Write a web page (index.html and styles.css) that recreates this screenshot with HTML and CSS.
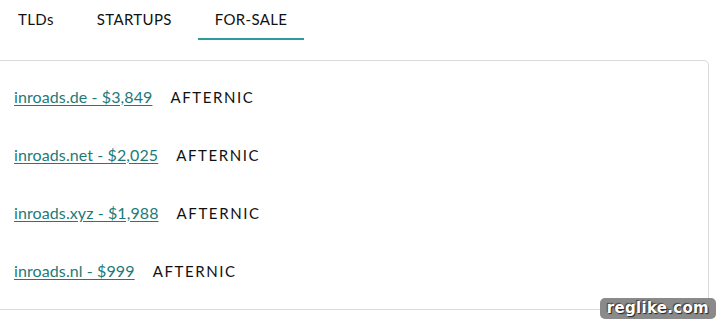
FILE: index.html
```html
<!DOCTYPE html>
<html>
<head>
<meta charset="utf-8">
<link rel="stylesheet" href="styles.css">
</head>
<body>
<div class="page">
  <nav class="tabs">
    <div class="tab">TLDs</div>
    <div class="tab">STARTUPS</div>
    <div class="tab active">FOR-SALE</div>
  </nav>
  <div class="card">
    <div class="row"><a class="link" href="#">inroads.de - $3,849</a><span class="vendor">AFTERNIC</span></div>
    <div class="row"><a class="link" href="#">inroads.net - $2,025</a><span class="vendor">AFTERNIC</span></div>
    <div class="row"><a class="link" href="#">inroads.xyz - $1,988</a><span class="vendor">AFTERNIC</span></div>
    <div class="row"><a class="link" href="#">inroads.nl - $999</a><span class="vendor">AFTERNIC</span></div>
  </div>
  <div class="watermark">reglike.com</div>
</div>
</body>
</html>
```
FILE: styles.css
```css
html, body {
  margin: 0;
  padding: 0;
  background: #fff;
}
.page {
  position: relative;
  width: 717px;
  height: 323px;
  overflow: hidden;
  font-family: Lato, "Open Sans", sans-serif;
  color: #111;
}
.tabs {
  display: flex;
  gap: 9px;
  padding-left: 1px;
  height: 40px;
}
.tab {
  padding: 0 17px;
  font-size: 15px;
  letter-spacing: 0.35px;
  line-height: 39px;
  height: 38px;
  color: #111;
  border-bottom: 2px solid transparent;
}
.tab.active {
  border-bottom-color: #2f9a9a;
}
.card {
  margin-top: 20px;
  margin-left: -4px;
  width: 713px;
  height: 250px;
  border: 1px solid #d6dadd;
  border-radius: 5px;
  padding-top: 6px;
  box-sizing: border-box;
  display: flex;
  flex-direction: column;
}
.row {
  display: flex;
  align-items: center;
  gap: 18px;
  height: 58px;
  padding-left: 17px;
}
.link {
  color: #1d7a78;
  font-size: 16px;
  letter-spacing: 0.1px;
  text-decoration: underline;
  text-underline-offset: 2px;
}
.vendor {
  font-size: 15px;
  letter-spacing: 1.6px;
  color: #111;
  margin-top: 2px;
}
.watermark {
  position: absolute;
  right: 1px;
  bottom: 4px;
  padding: 1px 7px 2px;
  background: #8a8a8a;
  border-radius: 5px;
  color: #fff;
  font-family: "DejaVu Sans", sans-serif;
  font-weight: bold;
  font-size: 15px;
  letter-spacing: 0.3px;
  text-shadow: 1px 1px 1px #222, -1px -1px 1px #444;
}
```
